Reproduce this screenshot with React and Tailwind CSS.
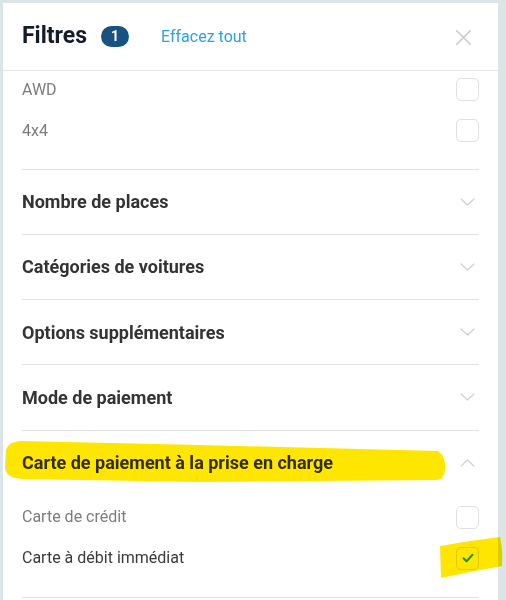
import React from "react";

const font = { fontFamily: "Roboto, 'Liberation Sans', sans-serif" };

function Checkbox({ checked }) {
  return (
    <div className="w-[23px] h-[23px] rounded-[5px] border border-[#e0e0e0] bg-white flex items-center justify-center">
      {checked && (
        <svg width="12" height="10" viewBox="0 0 12 10" fill="none">
          <path d="M1.5 5.2 L4.6 8.2 L10.5 1.8" stroke="#22a02a" strokeWidth="2" strokeLinecap="round" strokeLinejoin="round" />
        </svg>
      )}
    </div>
  );
}

function Chevron({ up }) {
  return (
    <svg width="15" height="8" viewBox="0 0 15 8" fill="none" className="mr-[4px]">
      <path d={up ? "M1 7 L7.5 1 L14 7" : "M1 1 L7.5 7 L14 1"} stroke="#d0d0d0" strokeWidth="1.2" strokeLinecap="round" strokeLinejoin="round" />
    </svg>
  );
}

function Option({ label, checked, dark }) {
  return (
    <div className="h-[41px] flex items-center justify-between">
      <span className={`text-[16px] ${dark ? "text-[#3a3a3a]" : "text-[#7c7c7c]"}`}>{label}</span>
      <Checkbox checked={checked} />
    </div>
  );
}

function Section({ title, up }) {
  return (
    <div className="h-[64.25px] flex items-center justify-between">
      <span className="text-[18px] font-bold text-[#333333]">{title}</span>
      <Chevron up={up} />
    </div>
  );
}

export default function App() {
  return (
    <div className="relative w-[506px] h-[600px] overflow-hidden bg-[#d9e5e6] pt-[3px] pl-[3px] pr-[8px]" style={font}>
      <div className="bg-white h-full flex flex-col">
        <div className="h-[68px] flex items-center border-b border-[#e6e6e6] pl-[19px] pr-[27px] shrink-0">
          <span className="text-[23px] font-bold text-[#141b2d]">Filtres</span>
          <span className="ml-[14px] w-[28px] h-[21px] rounded-full bg-[#175282] text-white text-[14px] font-bold flex items-center justify-center">1</span>
          <span className="ml-[32px] text-[16px] text-[#2f9fe4]">Effacez tout</span>
          <svg className="ml-auto mt-[1px]" width="15" height="15" viewBox="0 0 15 15" fill="none">
            <path d="M0.7 0.7 L14.3 14.3 M14.3 0.7 L0.7 14.3" stroke="#c8c8c8" strokeWidth="1.5" strokeLinecap="round" />
          </svg>
        </div>
        <div className="flex-1 overflow-hidden pl-[19px] pr-[19px]">
          <div className="-mt-[2px] pb-[17.5px] border-b border-[#e2e2e2]">
            <Option label="AWD" />
            <Option label="4x4" />
          </div>
          <div className="border-b border-[#e2e2e2]"><Section title="Nombre de places" /></div>
          <div className="border-b border-[#e2e2e2]"><Section title="Catégories de voitures" /></div>
          <div className="border-b border-[#e2e2e2]"><Section title="Options supplémentaires" /></div>
          <div className="border-b border-[#e2e2e2]"><Section title="Mode de paiement" /></div>
          <div className="pb-[18px] border-b border-[#e2e2e2]">
            <Section title="Carte de paiement à la prise en charge" up />
            <div className="pt-[2px]">
              <Option label="Carte de crédit" />
              <Option label="Carte à débit immédiat" checked dark />
            </div>
          </div>
        </div>
      </div>
      <svg className="absolute left-0 top-0 pointer-events-none mix-blend-multiply" width="506" height="600" viewBox="0 0 506 600">
        <path d="M6 450 Q8 442 20 441 L200 445 L438 451 Q446 456 445 470 Q444 480 436 480 L200 482 L22 479 Q6 478 5 468 Z" fill="#ffe600" />
        <path d="M440 546 L470 541 L500 537 Q503 550 502 566 L470 572 L441 578 Z" fill="#ffe600" />
      </svg>
    </div>
  );
}
